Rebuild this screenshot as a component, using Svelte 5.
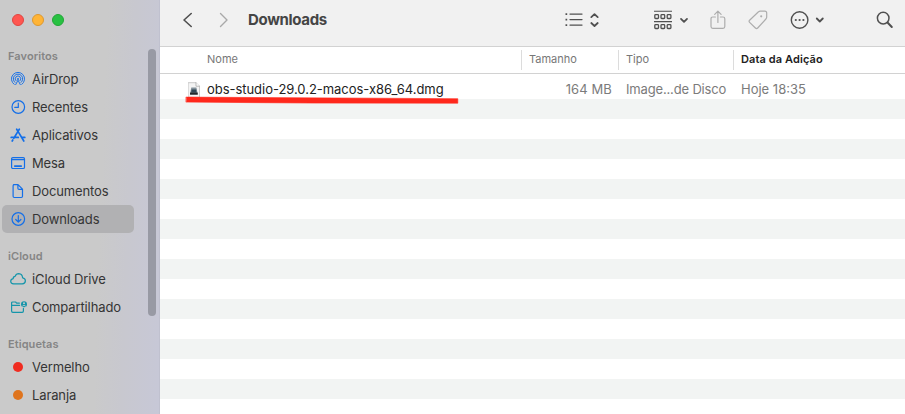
<script>
  const groups = [
    {
      title: 'Favoritos',
      items: [
        { label: 'AirDrop', icon: 'airdrop' },
        { label: 'Recentes', icon: 'clock' },
        { label: 'Aplicativos', icon: 'apps' },
        { label: 'Mesa', icon: 'desktop' },
        { label: 'Documentos', icon: 'doc' },
        { label: 'Downloads', icon: 'download', active: true }
      ]
    },
    {
      title: 'iCloud',
      items: [
        { label: 'iCloud Drive', icon: 'cloud' },
        { label: 'Compartilhado', icon: 'shared' }
      ]
    },
    {
      title: 'Etiquetas',
      items: [
        { label: 'Vermelho', icon: 'red' },
        { label: 'Laranja', icon: 'orange' }
      ]
    }
  ];
</script>

<div class="window">
  <aside>
    <div class="lights"><i class="close"></i><i class="min"></i><i class="max"></i></div>
    {#each groups as group}
      <section>
        <h2>{group.title}</h2>
        {#each group.items as item}
          <div class="item" class:active={item.active}>
            <svg class="icon" class:teal={group.title === 'iCloud'} viewBox="0 0 18 18" width="18" height="18">
              {#if item.icon === 'airdrop'}
                <g stroke-width=".95">
                  <path d="M5.2 14.4A6.6 6.6 0 1 1 12.8 14.4M5.9 12.4A4.7 4.7 0 1 1 12.1 12.4M7 10.8A2.8 2.8 0 1 1 11 10.8" />
                  <path d="M6.7 14.6L9 10.2L11.3 14.6" />
                </g>
                <circle cx="9" cy="9" r="1" class="solid" stroke="none" />
              {:else if item.icon === 'clock'}
                <circle cx="9.3" cy="9" r="6.3" /><path d="M9.3 5V9.4H5.8" />
              {:else if item.icon === 'apps'}
                <path d="M7.7 3.2L9 5.4L10.3 3.2M9 5.4L4.8 12.2M3.8 14L3.2 15M9 5.4L14.8 15M2.2 11.4H9.3M12.6 11.4H15.8" stroke-width="1.7" />
              {:else if item.icon === 'desktop'}
                <rect x="2.6" y="3.6" width="12.9" height="10.9" rx="1.3" /><path d="M3 5.6H15.2" /><path d="M5.8 12.1H12.2" stroke-width="1.8" />
              {:else if item.icon === 'doc'}
                <path d="M4.6 2.6H9L13.5 7.2V14.3Q13.5 15.5 12.3 15.5H5.3Q4.1 15.5 4.1 14.3V3.7Q4.1 2.6 5.3 2.6M8.9 2.8V6.2Q8.9 7.3 10 7.3H13.3" />
              {:else if item.icon === 'download'}
                <circle cx="9.3" cy="9" r="6.3" /><path d="M9.3 5.5V12M6.7 9.5L9.3 12.1L11.9 9.5" />
              {:else if item.icon === 'cloud'}
                <path d="M4.7 13.8Q1.7 13.7 1.7 11.2Q1.8 9 4.2 8.6Q4.2 6.5 6.1 6.4Q7.1 3.6 9.8 3.6Q13.3 3.8 13.6 7.8Q16.4 8.3 16.4 10.9Q16.2 13.8 13.3 13.8Z" />
              {:else if item.icon === 'shared'}
                <path d="M10.4 5.1H7.6L6.6 4H3.6Q2.6 4 2.6 5V13Q2.6 14.3 3.8 14.3H13.2Q14.4 14.3 14.4 13V10.4M2.6 7.3H10.6" />
                <circle cx="15" cy="6.2" r="3" class="solid" stroke="none" />
                <circle cx="15" cy="5.2" r="1" class="cut" />
                <path d="M13.5 8Q15 6.3 16.5 8" class="cut-line" />
              {:else}
                <circle cx="9" cy="9" r="5" stroke="none" fill={item.icon === 'red' ? '#f02c20' : '#df741d'} />
              {/if}
            </svg>
            <span>{item.label}</span>
          </div>
        {/each}
      </section>
    {/each}
    <div class="scrollbar"></div>
  </aside>

  <main>
    <header>
      <svg class="back" width="12" height="18" viewBox="0 0 12 18"><path d="M9.2 2.5L2 9L9.2 15.5" stroke-width="1.6" /></svg>
      <svg class="forward" width="12" height="18" viewBox="0 0 12 18"><path d="M2.5 2.5L9 9L2.5 15.5" stroke-width="1.4" /></svg>
      <h1>Downloads</h1>
      <div class="tools">
        <svg width="34" height="18" viewBox="0 0 34 18">
          <path d="M5 3.1H17M5 8.6H17M5 14.1H17" stroke-width="1.3" />
          <path d="M.5 3.1H2.2M.5 8.6H2.2M.5 14.1H2.2" stroke-width="1.7" stroke-linecap="butt" />
          <path d="M26.3 6.1L29.5 3.1L32.7 6.1M26.3 12L29.5 15L32.7 12" stroke-width="1.8" />
        </svg>
        <svg class="grid" width="36" height="20" viewBox="0 0 36 20">
          <path d="M0 1.2H18M0 11.6H18" stroke-width="1.1" stroke-linecap="butt" />
          <g stroke-width="1.3">
            {#each [0.8, 7, 13.2] as x}
              <rect {x} y="4.6" width="3.7" height="3.9" rx=".8" /><rect {x} y="14.6" width="3.7" height="3.9" rx=".8" />
            {/each}
          </g>
          <path d="M27 8.9L30 11.9L33 8.9" stroke-width="1.8" />
        </svg>
        <svg class="share dim" width="16" height="20" viewBox="0 0 16 20">
          <path d="M5.4 7H2.8Q1 7 1 8.8V16.6Q1 18.4 2.8 18.4H13Q14.8 18.4 14.8 16.6V8.8Q14.8 7 13 7H10.4M7.9 12.4V1.4M4.7 4.4L7.9 1.2L11.1 4.4" stroke-width="1.2" />
        </svg>
        <svg class="tag dim" width="20" height="20" viewBox="0 0 20 20">
          <path d="M10.5 1.8Q11.2 1.1 12.2 1.1H16.8Q18.7 1.1 18.7 3V7Q18.7 8.2 17.9 9L9.7 18Q8.6 19.2 7.4 18L1.6 12.4Q.5 11.3 1.6 10.2Z" stroke-width="1.2" />
          <circle cx="13.2" cy="6.3" r="1.1" class="dot" />
        </svg>
        <svg class="more" width="35" height="20" viewBox="0 0 35 20">
          <circle cx="9.6" cy="10" r="8.3" stroke-width="1.4" />
          <circle cx="5.8" cy="10" r="1.1" class="dot" /><circle cx="9.6" cy="10" r="1.1" class="dot" /><circle cx="13.4" cy="10" r="1.1" class="dot" />
          <path d="M26.8 8.5L29.8 11.5L32.8 8.5" stroke-width="1.8" />
        </svg>
        <svg class="search" width="18" height="18" viewBox="0 0 18 18">
          <circle cx="7.2" cy="7.1" r="5.8" stroke-width="1.5" /><path d="M11.5 11.5L15.8 16" stroke-width="2" />
        </svg>
      </div>
    </header>

    <div class="columns">
      <span class="name">Nome</span><span class="size">Tamanho</span><span class="type">Tipo</span><span class="date">Data da Adição</span>
    </div>

    <div class="list">
      <div class="row">
        <span class="name">
          <svg class="file" width="12" height="16" viewBox="0 0 12 16">
            <path d="M.5 .7H8L11.5 4.2V15.4H.5Z" fill="#f4f4f4" stroke="#bdbdbd" stroke-width=".8" />
            <path d="M8 .7V4.2H11.5" fill="#fff" stroke="#aaa" stroke-width=".8" />
            <path d="M3.3 5.4H8.4L9.6 11H2.1Z" fill="#84929b" stroke="none" />
            <path d="M3.6 7.6H8.2L8.6 10.5H3.2Z" fill="#2f4756" stroke="none" />
            <rect x="2" y="10.5" width="7.8" height="2.3" rx=".5" fill="#20272b" stroke="none" />
          </svg>
          <span class="filename">obs-studio-29.0.2-macos-x86_64.dmg</span>
        </span>
        <span class="size">164 MB</span><span class="type">Image...de Disco</span><span class="date">Hoje 18:35</span>
        <svg class="underline" width="274" height="9" viewBox="0 0 274 9"><path d="M1.3 1.1L272.8 2.7V7.2L130 7.1L1.3 6.1Z" fill="#ff281c" stroke="#ff281c" stroke-width=".6" /></svg>
      </div>
    </div>
  </main>
</div>

<style>
  .window {
    display: flex;
    width: 905px;
    height: 414px;
    overflow: hidden;
    font-family: Inter, "Liberation Sans", sans-serif;
    font-size: 13px;
    background: #fff;
  }
  svg { display: block; flex: none; fill: none; stroke-linecap: round; stroke-linejoin: round; }
  aside {
    position: relative;
    flex: none;
    box-sizing: border-box;
    width: 160px;
    border-right: 1px solid #c0c1cf;
    background: linear-gradient(92deg, #cacaca 0%, #cacaca 62%, #c8c8cf 78%, #c7c8d7 100%);
  }
  .lights { display: flex; gap: 8px; padding: 14px 0 0 12px; height: 33px; }
  .lights i { box-sizing: border-box; width: 12px; height: 12px; border-radius: 50%; border: 1px solid; }
  .lights .close { background: #ff5650; border-color: #df4641; }
  .lights .min { background: #ffb436; border-color: #dd982f; }
  .lights .max { background: #28c142; border-color: #22a637; }
  section + section { margin-top: 14px; }
  h2 { margin: 0; padding-left: 8px; height: 18px; font-size: 11px; line-height: 18px; font-weight: 600; letter-spacing: .08px; color: #858585; }
  .item { display: flex; align-items: center; gap: 5px; height: 28px; margin: 0 25px 0 2px; padding-left: 7px; border-radius: 5px; color: #353535; letter-spacing: -.12px; line-height: 17px; white-space: nowrap; }
  .item span { padding-top: 1px; }
  .active { background: #b1b1b3; }
  .icon { stroke: #146fe8; stroke-width: 1.2; }
  .icon .solid { fill: #146fe8; }
  .teal { stroke: #1495aa; overflow: visible; }
  .teal .solid { fill: #1495aa; }
  .cut { fill: #cacaca; stroke: none; }
  .cut-line { stroke: #cacaca; stroke-width: .9; }
  .scrollbar { position: absolute; right: 3px; top: 49px; width: 8px; height: 267px; border-radius: 4px; background: #989aa4; }
  main { flex: 1; min-width: 0; display: flex; flex-direction: column; }
  header { box-sizing: border-box; flex: none; height: 47px; padding: 0 11px 7px 22px; display: flex; align-items: center; background: #f1f1f1; border-bottom: 1px solid #d2d2d2; }
  header svg { stroke: #505050; }
  header .dot { fill: currentColor; stroke: none; color: #505050; }
  header .forward { margin-left: 24px; stroke: #a9a9a9; }
  header .dim { stroke: #adadad; }
  header .dim .dot { color: #adadad; }
  h1 { margin: 0 0 0 18px; font-size: 15px; line-height: 20px; font-weight: 700; letter-spacing: -.33px; color: #454545; }
  .tools { margin-left: auto; display: flex; align-items: center; }
  .grid { margin-left: 55px; }
  .share { margin-left: 20px; }
  .tag { margin-left: 22px; }
  .more { margin-left: 22px; }
  .search { margin-left: 51px; }
  .columns, .row { display: grid; grid-template-columns: 361px 97px 115px 1fr; }
  .columns { box-sizing: border-box; flex: none; height: 27px; padding-top: 3px; border-bottom: 1px solid #d2d2d2; font-size: 11px; line-height: 19px; color: #777; }
  .columns span { height: 20px; }
  .columns .name { padding-left: 47px; }
  .columns .size, .columns .type, .columns .date { box-sizing: border-box; border-left: 1px solid #dcdcdc; padding-left: 7px; }
  .columns .date { font-weight: 600; letter-spacing: .1px; color: #222; }
  .list { flex: 1; padding-top: 5px; background: repeating-linear-gradient(#fff 0 20px, #f2f4f3 20px 40px) 0 5px no-repeat; }
  .row { position: relative; height: 20px; line-height: 21px; color: #7b7b7b; white-space: nowrap; }
  .row .name { display: flex; align-items: center; gap: 7px; padding-left: 28px; color: #222; letter-spacing: -.04px; }
  .row .size { text-align: right; padding-right: 6px; letter-spacing: .12px; }
  .row .type { letter-spacing: -.16px; }
  .row .type, .row .date { padding-left: 8px; }
  .underline { position: absolute; left: 25px; top: 17px; }
</style>
